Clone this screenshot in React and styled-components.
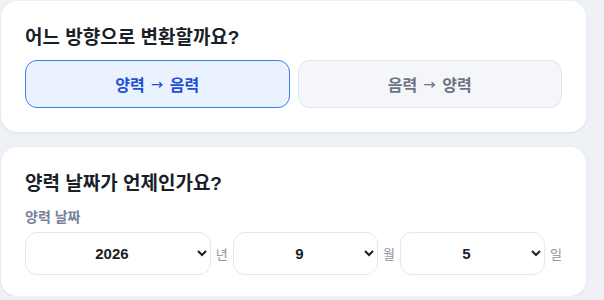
import React, { useState } from "react";
import styled, { createGlobalStyle } from "styled-components";

const GlobalStyle = createGlobalStyle`
  html, body {
    margin: 0;
    padding: 0;
    background: #eef1f5;
    font-family: "Liberation Sans", "Noto Sans CJK KR", sans-serif;
  }
`;

const Page = styled.main`
  display: flex;
  flex-direction: column;
  gap: 15px;
  width: 585px;
  padding: 1px 0 0 1px;
`;

const Card = styled.section`
  background: #ffffff;
  border-radius: 16px;
  box-shadow: 0 1px 3px rgba(20, 30, 60, 0.08);
  padding: ${(p) => (p.$compact ? "24px 24px 21px" : "24px")};
`;

const Title = styled.h2`
  margin: 0 0 ${(p) => p.$gap || 10}px;
  font-size: 19px;
  line-height: 25px;
  font-weight: 700;
  color: #191f28;
`;

const Toggle = styled.div`
  display: grid;
  grid-template-columns: 1fr 1fr;
  gap: 8px;
`;

const ToggleButton = styled.button`
  height: 48px;
  border-radius: 12px;
  font-family: inherit;
  font-size: 16px;
  font-weight: 700;
  cursor: pointer;
  border: 1px solid ${(p) => (p.$active ? "#3b7cf0" : "#e2e6ee")};
  background: ${(p) => (p.$active ? "#eaf2ff" : "#f4f6fa")};
  color: ${(p) => (p.$active ? "#1d4fd8" : "#6b7484")};
`;

const Arrow = styled.span`
  font-family: "Noto Sans CJK KR", sans-serif;
  font-size: 12px;
  margin: 0 2px;
  vertical-align: 1px;
`;

const Label = styled.div`
  font-size: 14px;
  line-height: 18px;
  font-weight: 600;
  color: #75829a;
  margin-bottom: 6px;
`;

const DateRow = styled.div`
  display: grid;
  grid-template-columns: 1.28fr auto 1fr auto 1fr auto;
  align-items: center;
  gap: 5px;
`;

const Select = styled.select`
  height: 43px;
  width: 100%;
  border: 1px solid #e4e8ef;
  border-radius: 12px;
  background: #ffffff;
  font-family: "Liberation Sans", "Noto Sans CJK KR", sans-serif;
  font-size: 15px;
  font-weight: 700;
  color: #191f28;
  text-align: center;
  padding: 0 8px;
`;

const Unit = styled.span`
  font-size: 13px;
  color: #8b95a5;
`;

const range = (from, to) =>
  Array.from({ length: to - from + 1 }, (_, i) => from + i);

export default function App() {
  const [dir, setDir] = useState("solar");
  const [year, setYear] = useState(2026);
  const [month, setMonth] = useState(9);
  const [day, setDay] = useState(5);

  const fromLabel = dir === "solar" ? "양력" : "음력";

  return (
    <>
      <GlobalStyle />
      <Page>
        <Card>
          <Title>어느 방향으로 변환할까요?</Title>
          <Toggle>
            <ToggleButton $active={dir === "solar"} onClick={() => setDir("solar")}>
              양력 <Arrow>→</Arrow> 음력
            </ToggleButton>
            <ToggleButton $active={dir === "lunar"} onClick={() => setDir("lunar")}>
              음력 <Arrow>→</Arrow> 양력
            </ToggleButton>
          </Toggle>
        </Card>

        <Card $compact>
          <Title $gap={12}>{fromLabel} 날짜가 언제인가요?</Title>
          <Label>{fromLabel} 날짜</Label>
          <DateRow>
            <Select value={year} onChange={(e) => setYear(+e.target.value)}>
              {range(1900, 2100).map((y) => (
                <option key={y} value={y}>{y}</option>
              ))}
            </Select>
            <Unit>년</Unit>
            <Select value={month} onChange={(e) => setMonth(+e.target.value)}>
              {range(1, 12).map((m) => (
                <option key={m} value={m}>{m}</option>
              ))}
            </Select>
            <Unit>월</Unit>
            <Select value={day} onChange={(e) => setDay(+e.target.value)}>
              {range(1, 31).map((d) => (
                <option key={d} value={d}>{d}</option>
              ))}
            </Select>
            <Unit>일</Unit>
          </DateRow>
        </Card>
      </Page>
    </>
  );
}
